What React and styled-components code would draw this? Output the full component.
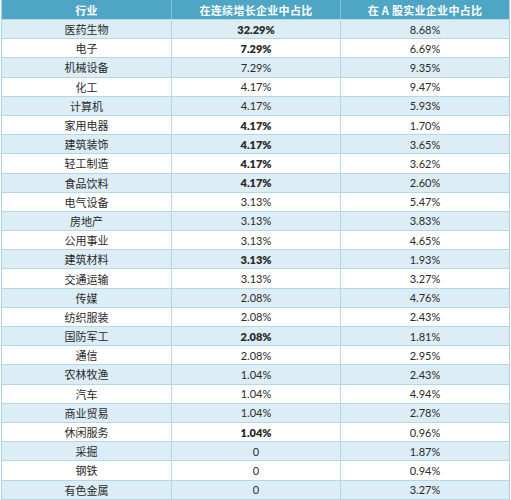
import React from "react"
import styled, { createGlobalStyle } from "styled-components"

const GlobalStyle = createGlobalStyle`
  html, body {
    margin: 0;
    padding: 0;
    background: #ffffff;
  }
  body {
    font-family: "Lato", "Noto Sans CJK SC", sans-serif;
  }
`

const Table = styled.div`
  width: 509px;
  margin-left: 1px;
  border-left: 1px solid #a9d2e2;
  border-right: 1px solid #a9d2e2;
  box-sizing: border-box;
  display: flex;
  flex-direction: column;
`

const HeaderRow = styled.div`
  display: grid;
  grid-template-columns: 169px 169px 1fr;
  height: 20px;
  background: #4ea6c4;
  border-bottom: 1px solid #b9dceb;
  box-sizing: border-box;
`

const HeaderCell = styled.div`
  display: flex;
  align-items: center;
  justify-content: center;
  color: #ffffff;
  font-family: "Noto Sans CJK SC", sans-serif;
  font-weight: 700;
  font-size: 11px;
  letter-spacing: 0.3px;
  border-left: ${p => (p.first ? "none" : "1px solid #86c3d8")};
`

const Row = styled.div`
  display: grid;
  grid-template-columns: 169px 169px 1fr;
  height: 19.2px;
  background: ${p => (p.shaded ? "#dcedf5" : "#ffffff")};
  border-bottom: 1px solid #b3d7e6;
  box-sizing: border-box;
`

const Cell = styled.div`
  display: flex;
  align-items: center;
  justify-content: center;
  color: #2a2a2a;
  font-size: 11px;
  font-family: ${p =>
    p.cjk ? '"Noto Sans CJK SC", sans-serif' : '"Lato", "DejaVu Sans", sans-serif'};
  font-weight: ${p => (p.bold ? 800 : 400)};
  border-left: ${p => (p.first ? "none" : "1px solid #b3d7e6")};
`

const rows = [
  ["医药生物", "32.29%", "8.68%", true],
  ["电子", "7.29%", "6.69%", true],
  ["机械设备", "7.29%", "9.35%"],
  ["化工", "4.17%", "9.47%"],
  ["计算机", "4.17%", "5.93%"],
  ["家用电器", "4.17%", "1.70%", true],
  ["建筑装饰", "4.17%", "3.65%", true],
  ["轻工制造", "4.17%", "3.62%", true],
  ["食品饮料", "4.17%", "2.60%", true],
  ["电气设备", "3.13%", "5.47%"],
  ["房地产", "3.13%", "3.83%"],
  ["公用事业", "3.13%", "4.65%"],
  ["建筑材料", "3.13%", "1.93%", true],
  ["交通运输", "3.13%", "3.27%"],
  ["传媒", "2.08%", "4.76%"],
  ["纺织服装", "2.08%", "2.43%"],
  ["国防军工", "2.08%", "1.81%", true],
  ["通信", "2.08%", "2.95%"],
  ["农林牧渔", "1.04%", "2.43%"],
  ["汽车", "1.04%", "4.94%"],
  ["商业贸易", "1.04%", "2.78%"],
  ["休闲服务", "1.04%", "0.96%", true],
  ["采掘", "0", "1.87%"],
  ["钢铁", "0", "0.94%"],
  ["有色金属", "0", "3.27%"],
]

export default function App() {
  return (
    <>
      <GlobalStyle />
      <Table>
        <HeaderRow>
          <HeaderCell first>行业</HeaderCell>
          <HeaderCell>在连续增长企业中占比</HeaderCell>
          <HeaderCell>在 A 股实业企业中占比</HeaderCell>
        </HeaderRow>
        {rows.map(([name, a, b, bold], i) => (
          <Row key={name} shaded={i % 2 === 0}>
            <Cell first cjk>{name}</Cell>
            <Cell bold={bold}>{a}</Cell>
            <Cell>{b}</Cell>
          </Row>
        ))}
      </Table>
    </>
  )
}
